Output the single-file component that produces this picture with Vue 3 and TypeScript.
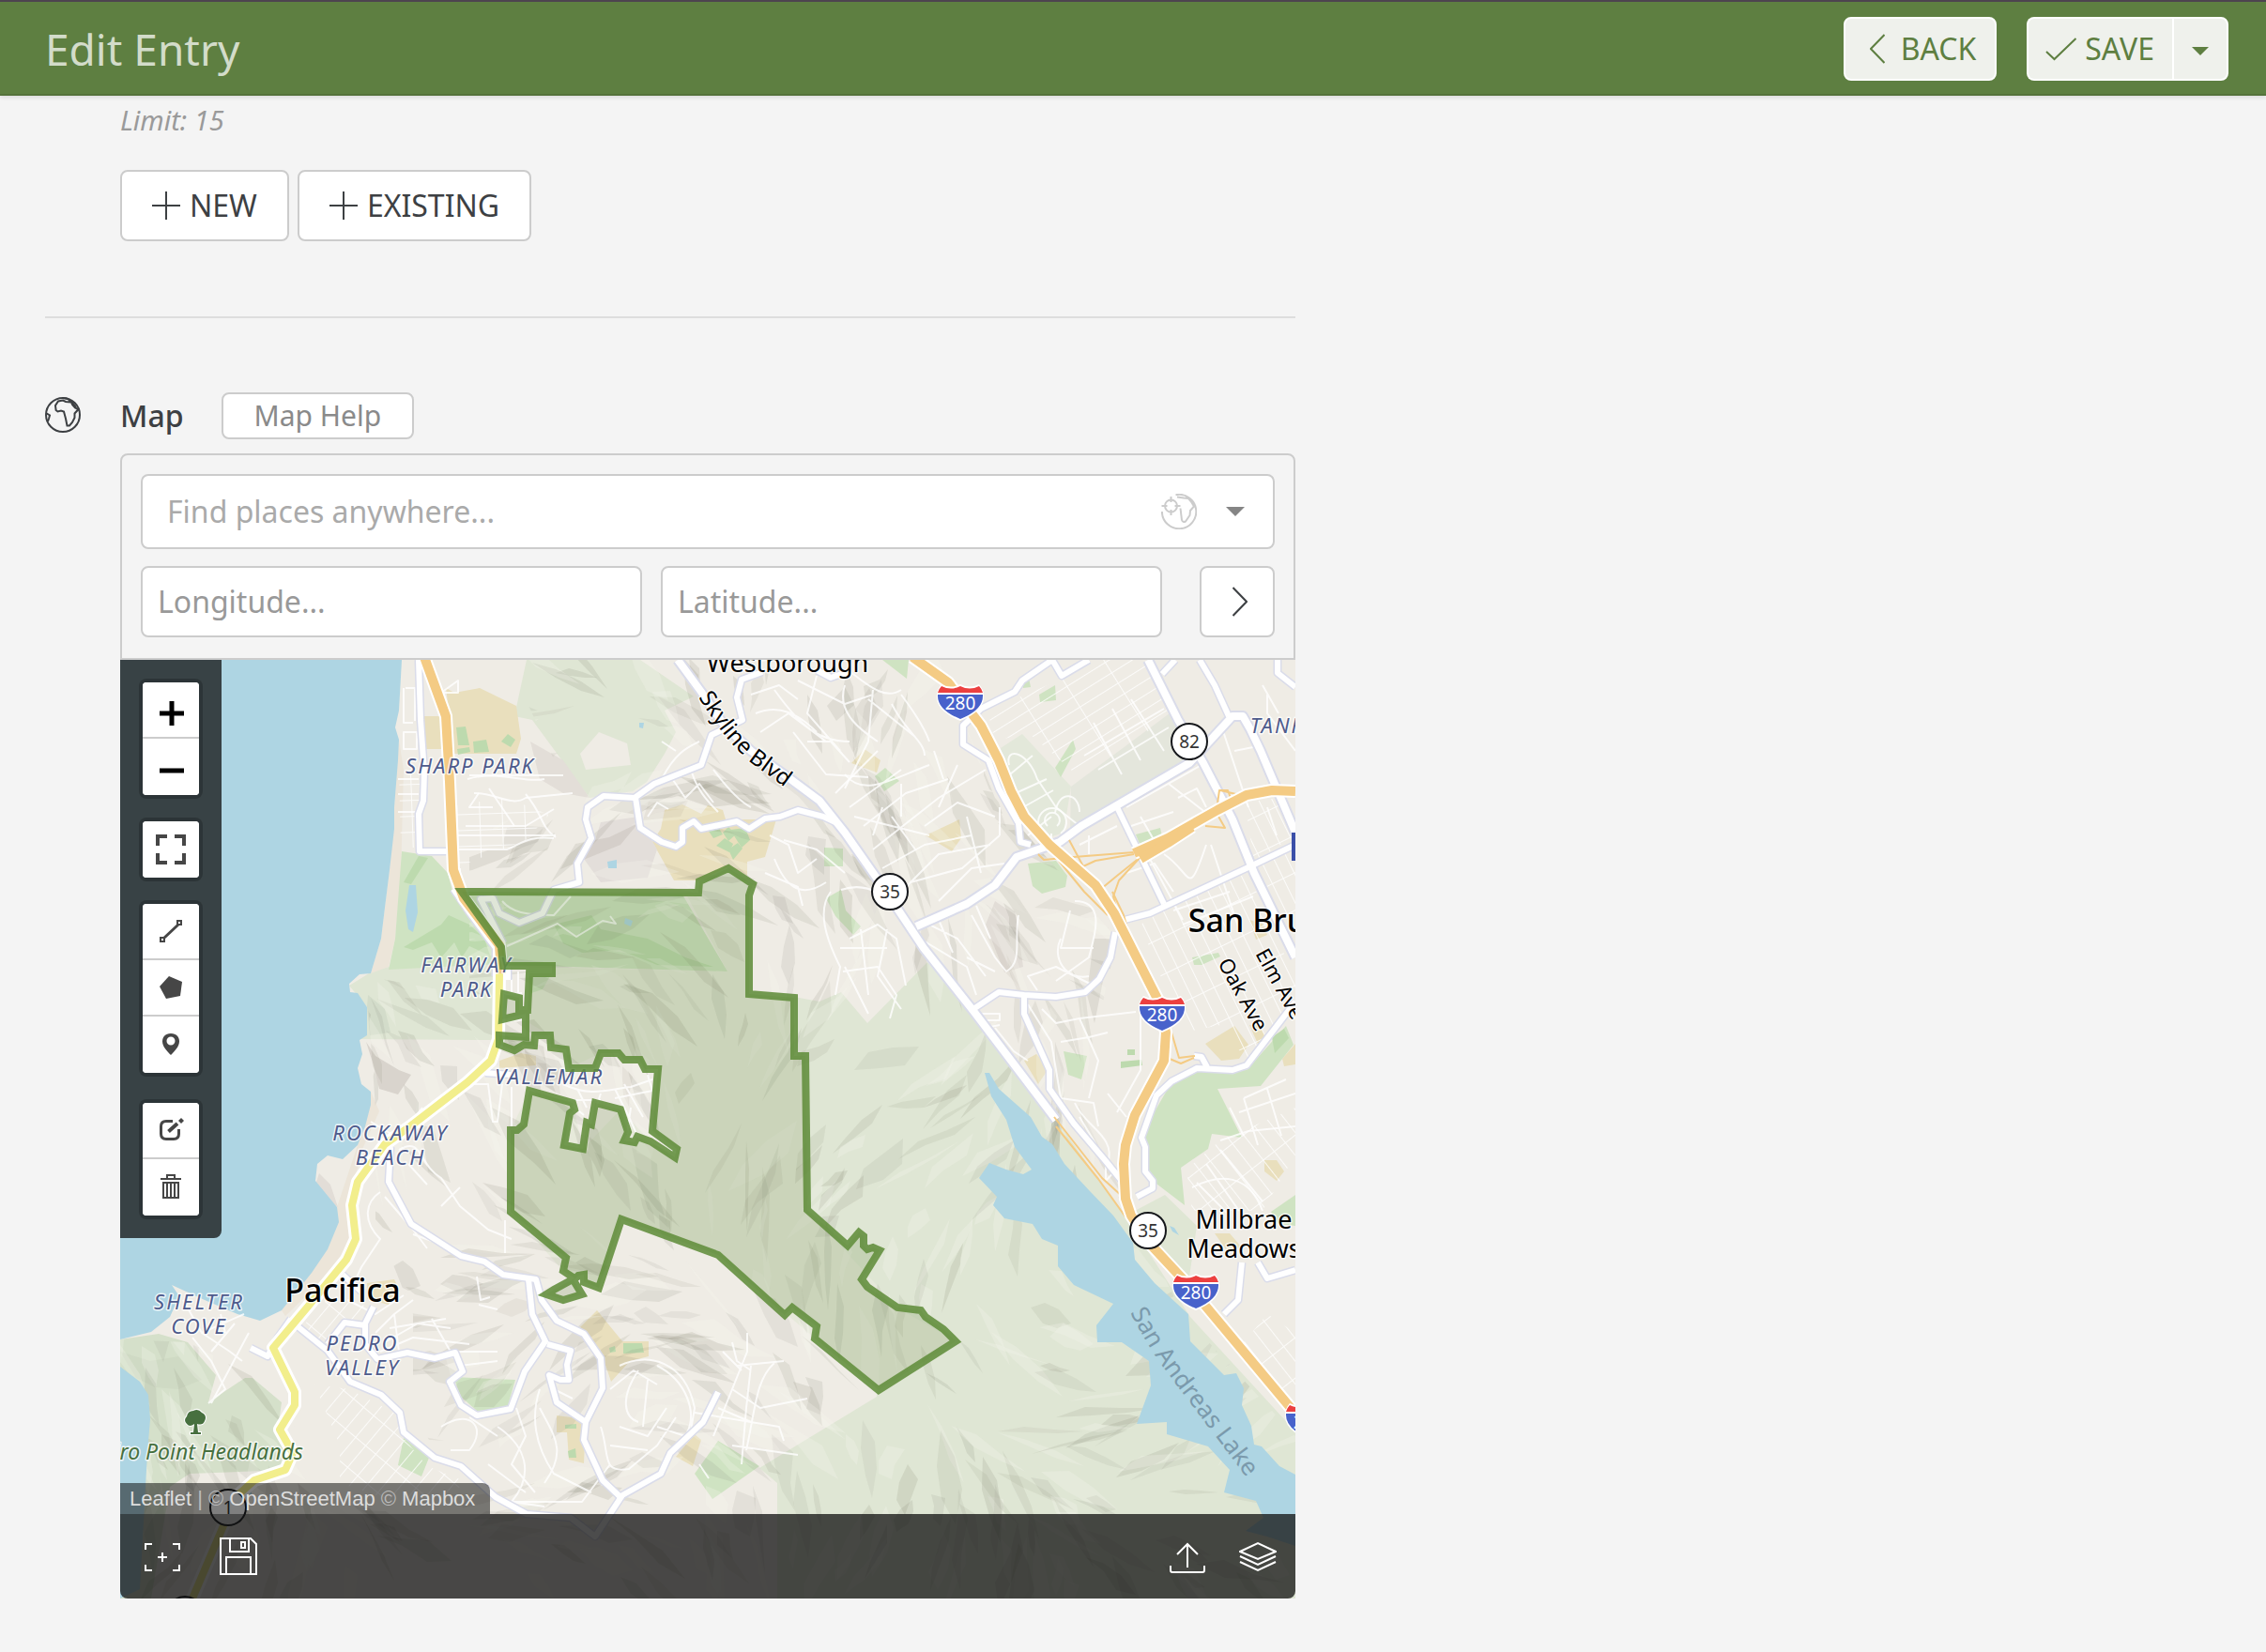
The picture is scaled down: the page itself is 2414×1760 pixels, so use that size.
<script setup lang="ts">
import { ref } from 'vue'

interface Shape {
  fill: string
  points: string
}
interface Label {
  x: number
  y: number
  lines: string[]
  kind: string
}
interface Marker {
  x: number
  y: number
  text: string
}

const place = ref('')
const longitude = ref('')
const latitude = ref('')

const sand = '#e9dfbd'
const park = '#cfe3c2'
const pale = '#dfe6d4'
const field = '#bddaae'
const beach = '#ece5d9'

const shapes: Shape[] = [
  // open space and watershed
  { fill: pale, points: '561,703 682,703 739,742 708,757 720,780 708,803 689,833 674,843 628,850 567,767 548,763' },
  { fill: '#efece5', points: '638,780 668,792 672,815 624,820 618,803' },
  { fill: pale, points: '846,1062 873,1067 896,1057 924,1090 988,1025 1037,1080 1125,1193 1203,1302 1268,1403 1380,1525 1380,1703 828,1703 828,1580 809,1564 934,1488 940,1380 858,1290' },
  { fill: '#e3e8da', points: '1066,797 1089,782 1141,838 1133,887 1118,892 1075,843' },
  { fill: '#e4e6dc', points: '1141,838 1246,760 1271,807 1140,884' },
  { fill: '#d5e0ca', points: '128,1427 169,1421 200,1430 230,1465 222,1494 261,1468 269,1468 300,1494 296,1523 312,1548 304,1566 202,1570 181,1584 161,1703 128,1703' },
  { fill: pale, points: '398,1034 430,1026 530,1026 525,1108 383,1107 391,1073 372,1050' },
  { fill: pale, points: '1207,1291 1241,1273 1275,1306 1266,1367 1224,1330' },
  // preserve inside the drawn region
  { fill: '#e6e9da', points: '730,951 776,925 802,942 798,1059 846,1063 846,1125 858,1125 860,1289 956,1393 1018,1429 936,1481 868,1426 765,1337 662,1299 638,1372 600,1354 544,1291 544,1204 564,1162 610,1175 621,1224 661,1182 693,1216 719,1233 695,1205 701,1139 640,1122 606,1138 586,1103 564,1090 564,1030 775,1035' },
  // beaches
  { fill: beach, points: '425,788 430,820 427,933 421,1000 414,1030 395,1037 406,1000 415,927 420,860' },
  { fill: beach, points: '395,1163 404,1184 387,1222 376,1262 369,1290 373,1324 344,1363 304,1402 300,1396 349,1331 359,1286 381,1220 387,1204' },
  // school grounds
  { fill: sand, points: '475,733 484,738 511,733 550,752 555,787 550,803 484,803' },
  { fill: sand, points: '452,763 472,763 476,798 453,798' },
  { fill: sand, points: '708,863 727,857 747,867 754,858 770,863 773,873 827,873 815,913 796,918 796,933 777,923 745,938 718,938 695,897 704,883' },
  { fill: sand, points: '532,1130 555,1122 571,1125 571,1135 532,1138' },
  { fill: sand, points: '636,1396 663,1429 691,1429 691,1445 671,1450 651,1472 640,1439 618,1414' },
  { fill: sand, points: '593,1508 624,1512 622,1559 606,1555 604,1526 593,1526' },
  { fill: sand, points: '720,1552 740,1528 747,1534 738,1562' },
  { fill: sand, points: '391,1367 420,1363 426,1375 414,1390 391,1384' },
  { fill: sand, points: '907,813 921,798 938,810 934,823' },
  { fill: sand, points: '986,890 1022,873 1024,893 1014,907' },
  { fill: sand, points: '1284,1112 1315,1093 1330,1113 1320,1128 1301,1130' },
  { fill: sand, points: '1091,1130 1104,1123 1118,1137 1106,1155' },
  { fill: sand, points: '1347,1236 1360,1236 1368,1248 1360,1258 1347,1248' },
  { fill: sand, points: '1331,980 1345,984 1350,996 1338,1001' },
  { fill: sand, points: '1331,1092 1342,1092 1348,1104 1340,1112' },
  { fill: sand, points: '1366,1128 1380,1112 1380,1134 1368,1136' },
  { fill: sand, points: '1294,1314 1310,1314 1322,1328 1308,1334' },
  // parks
  { fill: park, points: '428,907 460,912 477,930 483,953 528,1013 530,1027 414,1033 421,1000' },
  { fill: park, points: '498,950 727,953 775,1035 540,1028 536,1010' },
  { fill: park, points: '564,1040 586,1040 578,1054 566,1058' },
  { fill: park, points: '483,1467 549,1470 540,1501 508,1503 491,1488' },
  { fill: park, points: '430,1532 459,1548 449,1573 424,1561' },
  { fill: park, points: '765,1535 809,1562 759,1597 740,1570' },
  { fill: park, points: '940,703 968,703 966,723' },
  { fill: park, points: '932,827 943,818 958,832 942,843' },
  { fill: park, points: '878,903 898,904 898,923 878,923' },
  { fill: park, points: '880,957 896,948 901,970 917,987 909,996 890,976' },
  { fill: park, points: '1095,920 1125,917 1137,933 1135,945 1110,952 1100,944' },
  { fill: park, points: '1133,1120 1158,1125 1152,1150 1138,1145' },
  { fill: park, points: '1107,740 1124,730 1125,746 1108,748' },
  { fill: park, points: '1089,727 1096,722 1098,732 1090,733' },
  { fill: park, points: '1124,818 1143,788 1146,798 1130,828' },
  { fill: park, points: '1210,889 1236,882 1238,891 1214,899' },
  { fill: park, points: '1270,1020 1298,1015 1300,1019 1280,1028 1272,1028' },
  { fill: park, points: '1221,1200 1248,1153 1275,1142 1328,1140 1370,1093 1378,1113 1343,1157 1297,1160 1317,1200 1323,1212 1291,1208 1287,1224 1258,1244 1262,1284 1224,1255 1216,1215' },
  { fill: park, points: '1354,1291 1380,1273 1380,1306 1362,1304' },
  // playing fields
  { fill: field, points: '486,775 496,774 500,794 488,794' },
  { fill: field, points: '504,790 518,788 521,801 505,802' },
  { fill: field, points: '534,790 541,782 549,788 544,796' },
  { fill: field, points: '487,798 500,796 501,801 488,804' },
  { fill: field, points: '754,884 765,881 770,889 760,893' },
  { fill: field, points: '770,887 776,881 784,889 776,896' },
  { fill: field, points: '778,884 794,882 799,895 790,903' },
  { fill: field, points: '763,901 772,893 781,899 777,908' },
  { fill: field, points: '776,905 786,898 791,904 781,916' },
  { fill: field, points: '664,1431 684,1431 686,1441 664,1442' },
  { fill: field, points: '649,1436 655,1434 656,1440 650,1441' },
  { fill: field, points: '602,1518 614,1517 614,1522 602,1522' },
  { fill: field, points: '605,1546 613,1543 614,1553 606,1553' },
  { fill: field, points: '1201,1118 1209,1118 1209,1124 1201,1124' },
  { fill: field, points: '1194,1131 1216,1129 1217,1135 1194,1138' },
  { fill: field, points: '1355,1105 1368,1096 1373,1106 1358,1122' },
  { fill: field, points: '430,940 446,912 456,914 438,942' },
  { fill: field, points: '430,1009 470,985 478,975 500,985 516,1000 522,1018 500,1008 492,1020 484,1004 470,1020 460,1004 440,1012' },
  { fill: field, points: '590,985 630,975 640,990 690,1000 730,1020 760,1030 700,1028 660,1012 620,1015 600,1005' },
  // ridges seen as darker folds
  { fill: '#e3deda', points: '640,876 680,870 700,905 690,935 640,940 622,915 634,895' },
  { fill: '#e3ded8', points: '565,790 600,810 628,850 600,845 575,830' },
  { fill: '#d9d4cd', points: '390,1110 400,1125 425,1140 438,1145 424,1166 404,1160 398,1135' },
  { fill: '#e2ddd7', points: '340,1250 352,1262 360,1286 345,1275 336,1262' },
  { fill: '#cfdac4', points: '128,1440 160,1450 190,1445 215,1470 190,1480 165,1478 145,1468' },
  { fill: '#d3dcca', points: '392,1060 410,1075 416,1100 394,1103 391,1073' },
  { fill: '#e2ddd7', points: '1060,960 1082,975 1090,1030 1070,1036 1050,985' },
  { fill: '#dedbd3', points: '1165,1000 1185,1000 1175,1045 1166,1090 1158,1060' },
]

// Angular slivers of shadow and light that give the slopes their relief.
interface Facet {
  points: string
  fill: string
  opacity: number
}
function makeFacets(count: number): Facet[] {
  let state = 20731
  const next = () => {
    state = (state * 16807) % 2147483647
    return state / 2147483647
  }
  const facets: Facet[] = []
  for (let i = 0; i < count; i++) {
    const cx = 128 + next() * 1252
    const cy = 703 + next() * 1000
    const turn = 0.9 * Math.sin(cx / 120) + 0.8 * Math.cos(cy / 95) + 0.9 + (next() - 0.5) * 0.7
    const long = 16 + next() * 38
    const wide = 3 + next() * 10
    const outline = [
      [-long, -wide * 0.2],
      [-long * 0.4, -wide * (0.5 + next())],
      [long * 0.3, -wide * next()],
      [long, wide * 0.4],
      [long * 0.4, wide * (0.4 + next())],
      [-long * 0.3, wide * next()],
    ]
    const points = outline
      .map(([x, y]) => {
        const px = cx + x * Math.cos(turn) - y * Math.sin(turn)
        const py = cy + x * Math.sin(turn) + y * Math.cos(turn)
        return `${Math.round(px)},${Math.round(py)}`
      })
      .join(' ')
    const dark = next() > 0.38
    facets.push({ points, fill: dark ? '#6b6a58' : '#f6f8ee', opacity: dark ? 0.07 + next() * 0.06 : 0.25 })
  }
  return facets
}
const facets = makeFacets(900)

const waters: string[] = [
  '128,703 428,703 425,757 421,775 425,788 424,810 420,860 420,883 415,927 410,967 406,1000 395,1037 383,1038 372,1048 373,1057 381,1058 391,1073 391,1103 383,1108 386,1123 381,1138 385,1155 395,1163 395,1177 389,1200 381,1220 365,1235 349,1231 338,1240 336,1258 359,1286 361,1302 349,1331 332,1356 300,1396 277,1407 253,1400 218,1385 183,1369 191,1381 181,1403 161,1419 128,1427',
  '128,1456 149,1472 158,1486 160,1512 157,1548 155,1584 151,1656 149,1693 128,1703',
  '1049,1143 1054,1143 1064,1160 1098,1190 1102,1197 1110,1211 1121,1219 1134,1240 1161,1269 1186,1295 1207,1324 1209,1342 1230,1367 1266,1400 1268,1429 1304,1465 1317,1463 1325,1479 1323,1497 1333,1519 1336,1539 1344,1541 1363,1562 1380,1571 1380,1647 1371,1644 1350,1637 1327,1631 1346,1617 1338,1599 1304,1590 1310,1566 1287,1541 1243,1528 1243,1515 1211,1517 1226,1476 1224,1450 1195,1430 1169,1430 1168,1412 1186,1389 1144,1369 1127,1349 1127,1327 1110,1320 1100,1304 1070,1298 1058,1284 1062,1275 1043,1255 1054,1239 1072,1246 1090,1251 1099,1246 1081,1222 1072,1193 1056,1168',
  '436,943 443,943 445,972 440,993 435,990 432,970',
  '647,918 657,916 657,925 648,925',
  '666,978 674,981 672,987 665,984',
  '681,770 686,770 685,776 681,775',
  '1246,1306 1251,1308 1256,1316 1249,1312',
  '262,1592 268,1582 268,1592',
]

const grids: { id: string; points: string }[] = [
  { id: 'gridEast', points: '1336,925 1380,905 1380,1005 1372,1000' },
  { id: 'gridEast', points: '1245,966 1330,930 1365,1010 1380,1040 1380,1060 1330,1132 1300,1092 1260,1100 1215,985' },
  { id: 'gridEast', points: '1326,855 1362,850 1380,890 1336,918' },
  { id: 'gridTop', points: '1052,757 1130,724 1165,703 1220,703 1248,762 1150,828 1095,780 1060,790' },
  { id: 'gridWest', points: '425,820 448,820 447,903 427,903' },
  { id: 'gridWest', points: '484,858 540,850 585,868 560,895 484,925' },
  { id: 'gridValley', points: '335,1475 372,1480 420,1505 428,1530 455,1562 500,1580 440,1606 362,1580 362,1540' },
  { id: 'gridValley', points: '318,1418 352,1380 392,1392 385,1410 365,1405 348,1430' },
  { id: 'gridMill', points: '1264,1246 1300,1215 1380,1180 1380,1230 1345,1290 1270,1290' },
  { id: 'gridMill', points: '1325,1430 1350,1400 1380,1420 1380,1480 1366,1480' },
]

const streets: string[] = [
  'M498 830 C530 820 560 835 580 830 M505 845 C530 845 545 860 560 850 L610 845 M496 880 H560 L590 862 M484 905 H540 C555 900 560 890 590 893 M490 925 V960 M535 960 C545 972 560 975 590 975 L608 955',
  'M500 826 H600 M510 845 L500 860 H525 M521 840 L548 880 M560 846 C580 870 575 880 592 892 M484 890 H592',
  'M430 733 V770 H440 M432 733 H442 V768 M430 780 H444 V798 H430 Z M424 830 H446 M424 846 H446 M424 865 H446 M470 738 L488 725 V738 Z',
  'M705 830 C720 800 735 795 745 790 M715 828 L730 850 L745 835 L760 855 M760 820 C775 840 790 855 800 860 M735 815 C740 840 755 855 765 865 M690 870 L700 855 L712 862 M720 800 L705 790',
  'M800 740 L830 730 L850 745 M805 760 C830 750 850 760 870 780 M810 780 L840 760 L880 790 M825 735 C850 770 870 790 905 790 M850 725 L900 750 L930 740 M870 720 L860 760 L895 800 M905 715 C930 735 945 745 960 735 M900 730 C890 760 920 780 935 790 M930 735 L925 790 L900 840 M960 740 C975 760 985 775 990 790 M950 750 C965 780 985 790 985 805 M845 780 L880 825 L925 828 M860 790 L885 790 L905 812 M925 745 L975 785',
  'M890 845 L935 800 M905 860 L960 820 M900 825 C920 850 950 830 990 815 M920 880 L965 845 L1010 830 M910 870 L990 890 M930 905 L1000 850 L1050 820 M960 835 V870 M995 800 L1005 830 M1020 815 L1000 860 M940 925 L985 900 L1035 890 M950 870 L975 905 M965 945 L1000 910 L1055 900 M970 940 L1025 925 L1065 890 M985 880 L1020 855 L1060 870 M1000 960 L1035 925 L1070 920 M1030 870 L1045 930 M1065 860 V890 M940 860 L930 890',
  'M820 890 L840 900 L850 930 L870 915 M825 915 C835 940 850 960 880 940 M835 895 L870 905 L900 930 M815 930 L850 945 L855 965',
  'M885 950 C870 970 880 1000 895 1030 L890 1060 M896 948 C920 940 940 950 955 970 M905 1000 L935 985 L955 1000 L965 1050 M900 1030 L925 1080 M898 1035 L935 1030 L955 1060 L948 1085 M917 990 L925 1060 M945 990 L935 1040 L960 1075 M895 1010 L945 1010',
  'M980 1000 L1030 1030 L1040 1060 M990 985 L1020 1000 L1050 1040 M1000 980 L1015 1015 M1035 975 L1060 1020 L1072 1035 C1090 1025 1080 1000 1085 975 M1040 965 L1055 1000 M1130 1000 C1120 1020 1135 1045 1160 1040 M1145 960 C1180 960 1165 1000 1160 1020 L1125 1045 M1140 970 L1130 1010 L1165 1010 M1105 1055 L1095 1040 L1125 1030 L1165 1050 M1030 1020 L1060 1035',
  'M1075 815 C1070 795 1095 800 1105 830 L1125 860 M1076 825 L1100 805 M1082 845 L1115 830 M1090 860 L1122 842 M1125 860 L1150 880 M1095 890 L1120 870',
  'M1112 888 A15 15 0 1 1 1130 888 M1116 880 A8 8 0 1 1 1126 880 M1120 900 V888 M1150 865 C1150 845 1128 840 1124 866',
  'M1165 770 L1195 825 M1185 755 L1215 810 M1205 745 L1240 800 M1170 820 L1245 775 M1155 805 L1240 755 M1200 860 L1280 815 M1215 870 L1235 905 M1245 835 L1290 870 M1255 850 L1275 840 L1285 860 M1205 880 L1250 865 M1150 900 L1190 880 M1160 890 V910',
  'M1200 930 L1230 920 L1250 950 M1225 915 L1260 980 M1240 910 C1270 930 1265 960 1285 900 M1250 970 L1310 950 M1260 985 L1335 955 M1290 900 L1320 990 M1300 770 L1330 860 M1315 800 L1340 795 M1350 740 V760 L1380 800 M1345 730 L1362 760 M1350 860 L1360 890',
  'M1045 1080 H1065 V1087 H1045 Z M1050 1095 L1065 1092 M1110 1075 L1125 1090 L1150 1085 L1210 1078 M1095 1070 L1120 1110 L1130 1170 L1165 1175 L1170 1200 M1130 1110 L1160 1105 L1180 1100 M1150 1085 L1170 1130 L1160 1170 M1215 1080 V1140 L1190 1185 M1145 1175 C1155 1200 1190 1210 1180 1240 L1150 1190 M1180 1165 L1200 1190 M1060 1095 L1080 1120 L1095 1130 M1178 1235 V1258 L1190 1245',
  'M500 1155 L520 1155 L525 1195 H530 L535 1155 M545 1158 V1200 M600 1155 C630 1170 650 1160 672 1158 L695 1150 M615 1160 L625 1180 M640 1165 L635 1180 M655 1160 L670 1190 L680 1212 L720 1228 M665 1155 L685 1190 M690 1145 L695 1162 L655 1170 M672 1180 L668 1208 M610 1178 L622 1188 M605 1172 H640',
  'M545 1043 V1060 M552 1035 V1058 M536 1060 L556 1058 M540 1088 L556 1086',
  'M540 1008 L594 984 L614 998 L642 981 L656 984 L650 976',
  'M430 1205 L450 1180 M425 1225 C450 1210 445 1240 470 1255 L490 1285 L520 1310 L545 1320 M470 1285 L490 1265 M435 1240 L455 1262 M405 1270 C390 1280 385 1300 405 1320 L385 1350 L378 1365 M410 1275 L440 1310 L455 1330 M440 1315 L460 1322 M538 1300 V1335 M395 1195 L420 1210 M370 1385 L400 1400 L430 1380 M400 1420 L420 1400 L440 1385 M410 1430 L445 1410 L480 1415 M405 1440 L440 1425 L500 1432 M415 1415 L475 1405 M420 1400 L425 1440 M460 1405 L480 1440 L530 1440 M490 1455 L530 1450 M508 1360 L512 1385 L522 1382 M510 1390 L530 1395',
  'M205 1425 L225 1450 L240 1480 L222 1495 M215 1420 L245 1440 L258 1450 M235 1400 L240 1420 M250 1410 L225 1440 M265 1420 L225 1495 M195 1385 L215 1420 L260 1400',
  'M660 1455 C690 1440 730 1450 740 1500 L735 1530 M650 1480 L675 1460 L700 1475 M680 1460 C660 1490 665 1510 680 1515 M700 1455 C730 1470 745 1505 730 1530 L700 1520 M710 1500 L690 1530 L660 1520 M640 1520 C650 1550 640 1570 670 1565 L700 1540 L720 1510 M650 1540 L690 1545 M690 1470 L685 1520 M575 1480 C565 1510 570 1540 590 1570 L630 1590 M575 1500 C590 1530 605 1545 580 1580 M590 1480 L610 1490 M550 1500 L560 1530 L545 1560 L570 1590 M530 1520 C560 1540 570 1570 545 1600 L580 1605 M520 1560 L560 1590 M470 1520 C500 1500 520 1520 500 1545 L480 1545 M500 1510 L530 1530 M535 1600 H620 L650 1560',
  'M780 1430 L785 1450 L800 1460 M796 1420 V1440 L790 1455 L760 1530 M785 1455 L835 1450 M800 1455 L795 1500 L790 1560 M825 1452 C805 1470 805 1500 795 1545 M780 1480 L810 1500 L860 1490 M740 1505 L830 1520 L835 1535 M765 1500 L800 1515 M770 1440 L790 1460 M745 1560 L755 1575 M780 1540 L850 1550',
  'M1300 1215 L1330 1205 L1380 1200 M1320 1185 L1380 1165 M1325 1170 L1370 1150 M1270 1265 C1300 1250 1330 1250 1345 1290 M1285 1240 L1320 1290 M1275 1260 L1310 1295 M1300 1225 L1345 1280 M1325 1170 L1340 1220 M1350 1160 L1365 1210 M1310 1180 L1325 1210',
]

const roads: string[] = [
  'M1160 703 L1131 720 L1121 703 L1089 725 L1081 737 L1045 755 L1026 773 V793 L1053 810 L1064 840 L1085 877 L1087 897 L1098 900',
  'M1190 860 L1240 963',
  'M1198 980 L1225 973 L1332 923 L1380 900',
  'M1188 993 L1183 1020 L1171 1043 L1156 1057 L1125 1062 L1091 1060 L1064 1057 L1037 1075',
  'M1091 1060 V1080 L1118 1140 V1160 L1144 1197 L1178 1237 L1195 1258',
  'M1211 1275 L1228 1266 V1258 L1220 1248 V1222 L1216 1212 L1232 1167 L1248 1152 L1275 1138 L1313 1140 L1328 1135 L1380 1067',
  'M1286 1137 L1280 1126 L1272 1125',
  'M1323 1345 L1319 1385 L1304 1400',
  'M1340 1345 L1350 1362 L1380 1353',
  'M1278 703 L1294 730 L1309 763',
  'M1252 703 L1238 718',
  'M1361 703 V717 L1380 732',
  'M446 703 L448 767 L452 823 L451 853 L446 867 L447 907 L479 907',
  'M892 877 L877 870 L850 863 L831 870 L815 872 L798 883 L785 875 L747 883 L739 875 L727 882 V897 L720 902 L705 897 L682 882 L677 850',
  'M812 716 L790 724 L785 743 L791 767 L758 783 L747 815 L697 835 L676 850 L643 848 L626 860 L624 873 L630 893 L615 920 L617 940 L590 948 L578 973 L553 983 L532 973 L525 957 L512 958 L536 1005',
  'M870 714 L885 722 L902 716',
  'M483 947 L500 972 L528 1010 V1040',
  'M541 1030 V1044',
  'M517 1143 L544 1145',
  'M416 1222 L414 1259 L438 1304 L491 1338 L516 1344 L536 1358 L571 1363 L577 1385 L593 1407 L622 1421 L640 1447 L642 1479 L624 1515 L622 1534 L642 1577 L661 1595',
  'M563 1363 L567 1400 L581 1429 L559 1461 L544 1501 L508 1508 L491 1497 L479 1472 L493 1461 L485 1441 L463 1447 L434 1441 L402 1448 L389 1432 V1410 L398 1392',
  'M583 1432 L608 1439 L604 1454 L606 1470 L597 1470 L585 1465 L593 1494 L624 1515',
  'M318 1414 L349 1439 L373 1472 L406 1486 L426 1505 L430 1526 L463 1553 L491 1562 L528 1595 L561 1613 L608 1617 L634 1637 L663 1593 L704 1570 L714 1548 L749 1515 L765 1483',
  'M349 1432 L367 1409 L389 1412',
  'M310 1405 L296 1425 L285 1445 L267 1436',
  'M365 1358 L385 1376',
]

const arterials: string[] = [
  'M722 703 L747 737 L771 772 L800 800 L842 830 L873 853 L900 887 L942 947 L984 1010 L1037 1077 L1125 1193',
  'M976 987 L1030 963 L1060 943 L1083 913 L1129 897 L1152 880 L1267 813 L1313 763 L1324 763 L1332 777 L1343 800 L1380 887',
  'M1223 703 L1255 767 L1282 813 L1313 873 L1336 930 L1380 1020',
]

const freeways: string[] = [
  'M452 700 L475 763 L479 833 L483 927 L494 957 L532 1007 L534 1037',
  'M972 700 L1010 727 L1045 773 L1064 810 L1077 843 L1091 870 L1118 900 L1167 943 L1187 973 L1236 1070 L1242 1100 L1240 1130 L1209 1188 L1199 1220 L1197 1240 L1199 1277 L1205 1295 L1224 1324 L1264 1367 L1385 1512',
  'M1208 909 L1244 893 L1297 863 L1328 847 L1355 842 L1380 843',
  'M1215 915 L1244 898 L1270 881',
]

const ramps: string[] = [
  'M1106 910 L1112 916 L1144 913 L1208 908',
  'M1139 895 L1154 923 L1167 917 L1208 910',
  'M1173 947 L1190 933 L1215 913',
  'M1215 913 L1192 938 L1186 955 L1190 972',
  'M1128 917 L1155 950 L1180 975',
  'M1150 925 L1162 940',
  'M1185 950 L1197 975 L1203 995',
  'M1045 770 L1052 790',
  'M1248 1100 L1256 1127 L1273 1125 M1246 1128 L1258 1133 L1272 1127',
  'M1123 1190 L1174 1255 L1196 1275 M1125 1200 L1170 1256 L1203 1302',
  'M1284 880 L1305 882 L1297 868 M1296 863 L1299 842 L1308 842 L1312 853 M1300 842 L1325 848',
]

const coastRoad =
  'M532 1037 L531 1107 L523 1130 L498 1153 L437 1200 L410 1219 L381 1259 L375 1284 L379 1320 L369 1342 L328 1392 L291 1436 L314 1483 V1497 L298 1523 L312 1548 L304 1566 L271 1577 L251 1595 L202 1710'

const region =
  '492,950 744,951 745,939 776,925 802,942 798,954 798,1059 846,1063 846,1125 858,1125 860,1289 903,1327 915,1313 920,1317 920,1327 924,1331 930,1329 937,1332 918,1363 924,1371 956,1393 981,1396 986,1403 1005,1416 1018,1429 936,1481 868,1426 870,1413 844,1393 836,1401 765,1337 662,1299 638,1372 622,1366 622,1358 616,1359 611,1364 620,1379 600,1385 582,1379 590,1374 612,1362 600,1354 603,1340 544,1291 544,1204 551,1204 558,1198 564,1162 610,1175 612,1182 607,1186 601,1220 621,1224 625,1196 630,1198 634,1175 661,1182 669,1206 665,1215 676,1217 679,1211 693,1216 719,1233 721,1224 695,1205 701,1139 687,1139 682,1129 665,1129 659,1122 640,1122 634,1138 606,1138 603,1118 587,1116 586,1103 570,1103 569,1114 558,1113 548,1119 532,1113 532,1103 560,1105 560,1080 535,1086 537,1059 553,1063 553,1076 562,1076 564,1037 588,1037 588,1029 536,1029 534,1009'

const labels: Label[] = [
  { x: 501, y: 824, lines: ['SHARP PARK'], kind: 'area' },
  { x: 497, y: 1036, lines: ['FAIRWAY', 'PARK'], kind: 'area' },
  { x: 585, y: 1155, lines: ['VALLEMAR'], kind: 'area' },
  { x: 416, y: 1215, lines: ['ROCKAWAY', 'BEACH'], kind: 'area' },
  { x: 212, y: 1395, lines: ['SHELTER', 'COVE'], kind: 'area' },
  { x: 386, y: 1439, lines: ['PEDRO', 'VALLEY'], kind: 'area' },
  { x: 1392, y: 781, lines: ['TANFORAN'], kind: 'area' },
  { x: 365, y: 1387, lines: ['Pacifica'], kind: 'city' },
  { x: 1350, y: 993, lines: ['San Bruno'], kind: 'city' },
  { x: 839, y: 716, lines: ['Westborough'], kind: 'town' },
  { x: 1325, y: 1309, lines: ['Millbrae', 'Meadows'], kind: 'town' },
]
const lineStep: Record<string, number> = { area: 26, city: 40, town: 31 }

const shields: Marker[] = [
  { x: 1023, y: 748, text: '280' },
  { x: 1238, y: 1080, text: '280' },
  { x: 1274, y: 1376, text: '280' },
  { x: 1394, y: 1514, text: '280' },
]
const circles: Marker[] = [
  { x: 1267, y: 790, text: '82' },
  { x: 948, y: 950, text: '35' },
  { x: 1223, y: 1311, text: '35' },
  { x: 243, y: 1606, text: '1' },
  { x: 197, y: 1720, text: '1' },
]
</script>

<template>
  <div class="page">
    <header class="topbar">
      <h1>Edit Entry</h1>
      <div class="actions">
        <button type="button" class="action">
          <svg class="ico-back" viewBox="0 0 16 32"><path d="M15.5 1 L1 16 L15.5 31" /></svg>
          <span>BACK</span>
        </button>
        <div class="split">
          <button type="button" class="action save">
            <svg class="ico-check" viewBox="0 0 34 32"><path d="M1 19 L9.500 27 L32.500 5" /></svg>
            <span>SAVE</span>
          </button>
          <button type="button" class="action more" aria-label="More save options">
            <svg class="ico-caret" viewBox="0 0 18 9"><path d="M0 0 H18 L9 9 Z" /></svg>
          </button>
        </div>
      </div>
    </header>

    <main class="content">
      <div class="column">
        <section class="related">
          <p class="limit">Limit: 15</p>
          <div class="adders">
            <button type="button" class="outline">
              <svg class="ico-plus" viewBox="0 0 30 30"><path d="M15 0 V30 M0 15 H30" /></svg>NEW
            </button>
            <button type="button" class="outline">
              <svg class="ico-plus" viewBox="0 0 30 30"><path d="M15 0 V30 M0 15 H30" /></svg>EXISTING
            </button>
          </div>
        </section>

        <hr />

        <section class="field">
          <svg class="globe" viewBox="0 0 38 38">
            <circle cx="19" cy="19" r="18" />
            <path d="M11.600 14 L11 9 L14 4.500 L19 3.500 L22 5 L28 5.500 L29 8 L32 11.500 L35.500 13 L31.500 17.500 L31.500 22 L29 27 L26 30.500 L23.500 30.500 L22 23 L20 15.500 L17 14.500 L13.500 15.500 Z M1 17 L5 19.500 L4 23 L3 26 M19 1 L24 2 L29 5.500 L33 11" />
          </svg>
          <div class="field-body">
            <div class="field-head">
              <h2>Map</h2>
              <button type="button" class="help">Map Help</button>
            </div>

            <div class="search-panel">
              <div class="search">
                <input v-model="place" type="text" aria-label="Find places" placeholder="Find places anywhere..." />
                <button type="button" class="bare" aria-label="Use my location">
                  <svg class="ico-locate" viewBox="0 0 38 38">
                    <path d="M.9 19 A18.200 18.200 0 1 0 15.500 1.200 M20.500 15.500 L22 28 Q23 31 26 29.500 L30.500 23 L31 18 L35 13.500 L32 8.500 L29 5 L24 4.500 L17 3.500" />
                    <circle cx="10.500" cy="13" r="6.500" />
                    <path d="M10.500 3 V9 M10.500 17 V23 M0.500 13 H6.500 M14.500 13 H20.500" />
                  </svg>
                </button>
                <button type="button" class="bare" aria-label="Show options">
                  <svg class="ico-drop" viewBox="0 0 20 10"><path d="M0 0 H20 L10 10 Z" /></svg>
                </button>
              </div>
              <div class="coords">
                <input v-model="longitude" type="text" aria-label="Longitude" placeholder="Longitude..." />
                <input v-model="latitude" type="text" aria-label="Latitude" placeholder="Latitude..." />
                <button type="button" class="go" aria-label="Go to coordinates">
                  <svg class="ico-go" viewBox="0 0 16 32"><path d="M.5 1 L15 16 L.5 31" /></svg>
                </button>
              </div>
            </div>

            <div class="map">
              <svg class="canvas" viewBox="128 703 1252 1000" preserveAspectRatio="xMinYMin slice" role="img" aria-label="Map of Pacifica and San Bruno">
                <defs>
                  <pattern id="gridEast" width="36" height="13" patternUnits="userSpaceOnUse" patternTransform="rotate(64)"><path d="M0 0 H36 M0 0 V13" /></pattern>
                  <pattern id="gridTop" width="48" height="13" patternUnits="userSpaceOnUse" patternTransform="rotate(-32)"><path d="M0 0 H48 M0 0 V13" /></pattern>
                  <pattern id="gridWest" width="24" height="17" patternUnits="userSpaceOnUse" patternTransform="rotate(-2)"><path d="M0 0 H24 M0 0 V17" /></pattern>
                  <pattern id="gridValley" width="30" height="14" patternUnits="userSpaceOnUse" patternTransform="rotate(-50)"><path d="M0 0 H30 M0 0 V14" /></pattern>
                  <pattern id="gridMill" width="34" height="15" patternUnits="userSpaceOnUse" patternTransform="rotate(52)"><path d="M0 0 H34 M0 0 V15" /></pattern>
                  <clipPath id="slopes">
                    <path d="M540 703 H1000 L1060 850 L1190 1000 L1150 1180 L1260 1400 L1380 1530 V1703 H128 V1427 L200 1430 L300 1480 L340 1600 L500 1620 L440 1500 L440 1400 L400 1300 L400 1180 L390 1040 L500 1060 L500 900 L600 830 Z" />
                  </clipPath>
                  <path id="skylinePath" d="M744 743 L760 767 Q778 794 802 814 L846 846" />
                  <path id="lakePath" d="M1204 1398 Q1222 1434 1244 1463 L1334 1582" />
                </defs>

                <rect class="land" x="128" y="703" width="1252" height="1000" />
                <polygon v-for="(s, i) in shapes" :key="'s' + i" :points="s.points" :fill="s.fill" />
                <g clip-path="url(#slopes)">
                  <polygon v-for="(f, i) in facets" :key="'n' + i" :points="f.points" :fill="f.fill" :fill-opacity="f.opacity" />
                </g>
                <polygon v-for="(w, i) in waters" :key="'w' + i" class="water" :points="w" />

                <polygon v-for="(g, i) in grids" :key="'g' + i" :points="g.points" :fill="`url(#${g.id})`" />
                <path v-for="(d, i) in streets" :key="'t' + i" class="street" :d="d" />
                <path v-for="(d, i) in roads" :key="'rc' + i" class="road-case" :d="d" />
                <path v-for="(d, i) in arterials" :key="'ac' + i" class="arterial-case" :d="d" />
                <path v-for="(d, i) in roads" :key="'r' + i" class="road" :d="d" />
                <path v-for="(d, i) in arterials" :key="'a' + i" class="arterial" :d="d" />
                <path v-for="(d, i) in ramps" :key="'m' + i" class="ramp" :d="d" />
                <path class="freeway-case" :d="coastRoad" />
                <path class="coast" :d="coastRoad" />
                <path v-for="(d, i) in freeways" :key="'fc' + i" class="freeway-case" :d="d" />
                <path v-for="(d, i) in freeways" :key="'f' + i" class="freeway" :d="d" />
                <rect x="1376" y="887" width="10" height="30" fill="#3b4fa8" />

                <g v-for="(c, i) in circles" :key="'c' + i">
                  <circle class="ring" :cx="c.x" :cy="c.y" r="19" />
                  <text class="ring-text" :x="c.x" :y="c.y + 7">{{ c.text }}</text>
                </g>
                <g v-for="(s, i) in shields" :key="'h' + i" :transform="`translate(${s.x} ${s.y})`">
                  <path d="M-20 -19 Q-10 -14 0 -19 Q10 -14 20 -19 Q26 -12 25 -4 Q24 10 0 20 Q-24 10 -25 -4 Q-26 -12 -20 -19 Z" fill="#fff" />
                  <path d="M-20 -17 Q-10 -12 0 -17 Q10 -12 20 -17 Q23 -14 24 -10 H-24 Q-23 -14 -20 -17 Z" fill="#ec4040" />
                  <path d="M-24 -8 H24 Q25 8 0 18 Q-25 8 -24 -8 Z" fill="#4862cb" />
                  <text class="shield-text" x="0" y="8">{{ s.text }}</text>
                </g>

                <g v-for="l in labels" :key="l.lines[0]" :class="['label', l.kind]">
                  <text v-for="(t, i) in l.lines" :key="t" :x="l.x" :y="l.y + i * lineStep[l.kind]">{{ t }}</text>
                </g>
                <text class="label street-name"><textPath href="#skylinePath">Skyline Blvd</textPath></text>
                <text class="label street-name small" transform="translate(1297 1026) rotate(61)">Oak Ave</text>
                <text class="label street-name small" transform="translate(1337 1016) rotate(61)">Elm Ave</text>
                <text class="label lake"><textPath href="#lakePath">San Andreas Lake</textPath></text>
                <g class="tree" transform="translate(208 1514)">
                  <path d="M-2 12 L-1 3 Q-6 7 -9 3 Q-13 -1 -9 -5 Q-8 -11 -2 -11 Q3 -14 7 -9 Q13 -6 10 0 Q8 5 2 3 L3 12 H6 V14 H-5 V12 Z" />
                </g>
                <text class="label headland" x="323" y="1555">Pedro Point Headlands</text>

                <polygon class="region" :points="region" />
              </svg>

              <div class="tools">
                <div class="tool-group">
                  <button type="button" aria-label="Zoom in"><svg viewBox="0 0 36 36"><path class="thick" d="M19 9 V35 M6 22 H32" /></svg></button>
                  <button type="button" aria-label="Zoom out"><svg viewBox="0 0 36 36"><path class="thick" d="M6 22 H32" /></svg></button>
                </div>
                <div class="tool-group">
                  <button type="button" aria-label="Full screen"><svg viewBox="0 0 36 36"><path class="frame" d="M4 14 V4 H14 M22 4 H32 V14 M32 22 V32 H22 M14 32 H4 V22" /></svg></button>
                </div>
                <div class="tool-group">
                  <button type="button" aria-label="Draw a line"><svg viewBox="0 0 36 36"><path class="mid" d="M10 26 L26 11 " /><path class="knob" d="M7 25 H11 V29 H7 Z M25 7 H29 V11 H25 Z" /></svg></button>
                  <button type="button" aria-label="Draw a polygon"><svg viewBox="0 0 36 36"><path class="solid" d="M6 17 L16 6 L30 12 L28 27 L13 30 Z" /></svg></button>
                  <button type="button" aria-label="Draw a marker"><svg viewBox="0 0 36 36"><path class="solid" fill-rule="evenodd" d="M18 6 C24 6 27 10 27 14.500 C27 20 22 25 18 29 C14 25 9 20 9 14.500 C9 10 12 6 18 6 Z M18 9.500 A4.500 4.500 0 1 0 18 18.500 A4.500 4.500 0 1 0 18 9.500 Z" /></svg></button>
                </div>
                <div class="tool-group last">
                  <button type="button" aria-label="Edit layers"><svg viewBox="0 0 36 36"><path class="mid" d="M20 8.500 H13 Q7.500 8.500 7.500 14 V22 Q7.500 27.500 13 27.500 H21 Q26.500 27.500 26.500 22 V17" /><path class="pen" d="M15.500 19.500 L25 11" /><path class="solid" d="M29 5 L32 8 L29 11 L26 8 Z" /></svg></button>
                  <button type="button" aria-label="Delete layers"><svg viewBox="0 0 36 36"><path class="thin" d="M7 9 H29 M14 9 V5 H22 V9 M10 13 H26 V29 H10 Z M14 13 V29 M18 13 V29 M22 13 V29" /></svg></button>
                </div>
              </div>

              <div class="bottom">
                <p class="credit"><a href="#leaflet">Leaflet</a> | © <a href="#osm">OpenStreetMap</a> © <a href="#mapbox">Mapbox</a></p>
                <div class="bar">
                  <div class="bar-group views">
                    <button type="button" aria-label="Set view"><svg viewBox="0 0 40 40"><path d="M2 13 V7 H9 M31 7 H38 V13 M38 29 V35 H31 M9 35 H2 V29 M20 16 V26 M15 21 H25" /></svg></button>
                    <button type="button" aria-label="Save view"><svg viewBox="0 0 40 40"><path d="M1 1 H33 L39 7 V39 H1 Z M11 1 V15 H31 V1 M23 5 H27 V11 H23 Z M7 39 V21 H33 V39" /></svg></button>
                  </div>
                  <div class="bar-group">
                    <button type="button" aria-label="Upload"><svg viewBox="0 0 40 40"><path d="M20 32 V7 M9 18 L20 7 L31 18 M2 30 V35 Q2 37 4 37 H36 Q38 37 38 35 V30" /></svg></button>
                    <button type="button" aria-label="Layers"><svg viewBox="0 0 40 40"><path d="M1 15 L20 6 L39 15 L20 23 Z M1 20 L20 29 L39 20 M1 26 L20 35 L39 26" /></svg></button>
                  </div>
                </div>
              </div>
            </div>
          </div>
        </section>
      </div>
    </main>
  </div>
</template>

<style>
body {
  margin: 0;
  background: #f4f4f4;
}
</style>

<style scoped>
.page {
  min-height: 100vh;
  box-sizing: border-box;
  padding-bottom: 56px;
  font-family: 'Noto Sans', sans-serif;
  color: #3d4043;
}
.page *,
.page *::before {
  box-sizing: border-box;
}
button,
input {
  font: inherit;
  color: inherit;
}
button {
  margin: 0;
  cursor: pointer;
}
svg {
  display: block;
  flex: none;
  fill: none;
  stroke: currentColor;
}
.topbar {
  position: relative;
  display: flex;
  align-items: center;
  justify-content: space-between;
  height: 102px;
  padding: 2px 40px 0 48px;
  background: #5e7f41;
  border-top: 2px solid #4d444f;
  border-bottom: 2px solid #55733b;
  box-shadow: 0 2px 4px rgba(0, 0, 0, 0.1);
}
h1 {
  margin: 0;
  font-size: 46px;
  line-height: 60px;
  font-weight: 400;
  color: #d3dcca;
}
.actions {
  display: flex;
  gap: 32px;
}
.split {
  display: flex;
}
.action {
  display: flex;
  align-items: center;
  height: 68px;
  padding: 0 20px 0 26px;
  font-size: 32px;
  line-height: 40px;
  color: #5e7f41;
  background: #eff1ec;
  border: 2px solid #fff;
  border-radius: 8px;
}
.action svg {
  stroke-width: 2;
}
.ico-back {
  width: 16px;
  height: 32px;
  margin-right: 17px;
}
.save {
  padding: 0 19px 0 18px;
  border-right-width: 0;
  border-radius: 8px 0 0 8px;
}
.ico-check {
  width: 34px;
  height: 32px;
  margin-right: 8px;
}
.more {
  width: 60px;
  padding: 4px 0 0;
  justify-content: center;
  border-radius: 0 8px 8px 0;
}
.ico-caret,
.ico-drop {
  width: 18px;
  height: 9px;
  fill: currentColor;
  stroke: none;
}
.content {
  display: grid;
  grid-template-columns: minmax(0, 1332fr) 986fr;
  padding: 0 48px;
}
.related {
  padding: 6px 0 80px 80px;
}
.limit {
  margin: 0;
  font-size: 29px;
  line-height: 40px;
  font-style: italic;
  color: #9a9a9a;
}
.adders {
  display: flex;
  gap: 9px;
  margin-top: 33px;
}
.outline {
  display: flex;
  align-items: center;
  gap: 10px;
  height: 76px;
  padding: 0 32px;
  font-size: 32px;
  line-height: 40px;
  background: #fff;
  border: 2px solid #ccc;
  border-radius: 8px;
}
.ico-plus {
  width: 30px;
  height: 30px;
  stroke-width: 2;
}
hr {
  height: 2px;
  margin: 0;
  background: #ddd;
  border: 0;
}
.field {
  display: flex;
  padding-top: 79px;
}
.globe {
  width: 38px;
  height: 38px;
  margin: 5px 42px 0 0;
  stroke-width: 2;
}
.field-body {
  flex: 1;
  min-width: 0;
}
.field-head {
  display: flex;
  align-items: center;
  gap: 40px;
  height: 50px;
  margin-bottom: 15px;
}
h2 {
  margin: 0;
  font-size: 32px;
  line-height: 48px;
  font-weight: 500;
}
.help {
  height: 50px;
  padding: 0 33px;
  font-size: 30px;
  line-height: 40px;
  color: #8a8a8a;
  background: #fff;
  border: 2px solid #ccc;
  border-radius: 8px;
}
.search-panel {
  padding: 20px;
  border: 2px solid #ccc;
  border-radius: 8px 8px 0 0;
}
.search {
  display: flex;
  align-items: center;
  gap: 31px;
  height: 80px;
  padding: 0 30px 0 26px;
  background: #fff;
  border: 2px solid #ccc;
  border-radius: 8px;
}
.search input {
  flex: 1;
  min-width: 0;
  height: 60px;
  padding: 0 0 2px;
  font-size: 32px;
  background: none;
  border: 0;
}
.search input::placeholder {
  color: #aaa;
  opacity: 1;
}
.bare {
  padding: 0;
  background: none;
  border: 0;
}
.ico-locate {
  width: 38px;
  height: 38px;
  color: #ccc;
  stroke-width: 2;
}
.ico-drop {
  width: 20px;
  height: 10px;
  color: #858585;
}
.coords {
  display: flex;
  gap: 20px;
  margin: 18px 0 2px;
}
.coords input {
  flex: 1;
  min-width: 0;
  height: 76px;
  padding: 0 16px 2px;
  font-size: 32px;
  background: #fff;
  border: 2px solid #ccc;
  border-radius: 8px;
}
.coords input::placeholder {
  color: #999;
  opacity: 1;
}
.go {
  display: flex;
  align-items: center;
  justify-content: center;
  width: 80px;
  height: 76px;
  margin-left: 20px;
  padding: 0 0 0 6px;
  background: #fff;
  border: 2px solid #ccc;
  border-radius: 8px;
}
.ico-go {
  width: 16px;
  height: 32px;
  stroke-width: 2;
}

.map {
  position: relative;
  aspect-ratio: 1252 / 1000;
  overflow: hidden;
}
.canvas {
  width: 100%;
  height: 100%;
  stroke: none;
}
.canvas pattern path {
  stroke: #fff;
  stroke-width: 2;
  opacity: 0.8;
}
.land {
  fill: #efece5;
}
.water {
  fill: #aed5e3;
}
.street,
.road,
.road-case,
.arterial,
.arterial-case,
.ramp,
.coast,
.freeway,
.freeway-case {
  fill: none;
  stroke: #fff;
  stroke-linejoin: round;
}
.street {
  stroke-width: 2;
  opacity: 0.8;
}
.road-case {
  stroke: #dadcea;
  stroke-width: 9;
}
.road {
  stroke-width: 6;
}
.arterial-case {
  stroke: #dadcea;
  stroke-width: 12;
}
.arterial {
  stroke-width: 8;
}
.ramp {
  stroke: #f4cb84;
  stroke-width: 2;
}
.freeway-case {
  stroke-width: 14;
}
.freeway {
  stroke: #f4cb84;
  stroke-width: 10;
}
.coast {
  stroke: #f2ee8c;
  stroke-width: 8;
}
.ring {
  fill: #fff;
  stroke: #16181c;
  stroke-width: 2;
}
.ring-text,
.shield-text {
  font-size: 19px;
  text-anchor: middle;
  fill: #333;
}
.shield-text {
  fill: #fff;
}
.label {
  font-size: 24px;
  fill: #000;
  stroke: rgba(255, 255, 255, 0.75);
  stroke-width: 3;
  stroke-linejoin: round;
  paint-order: stroke;
}
.area text,
.city text,
.town text {
  text-anchor: middle;
}
.area {
  font-size: 22px;
  font-style: italic;
  letter-spacing: 2px;
  fill: #4e5b8c;
}
.city {
  font-size: 34px;
  font-weight: 500;
}
.town {
  font-size: 27px;
}
.small {
  font-size: 22px;
}
.lake {
  font-size: 26px;
  fill: #7b9aac;
  stroke: none;
}
.headland {
  font-size: 23px;
  font-style: italic;
  fill: #47703f;
  text-anchor: end;
}
.tree {
  fill: #47703f;
  stroke: #fff;
  stroke-width: 2;
  paint-order: stroke;
}
.region {
  fill: rgba(94, 131, 62, 0.2);
  stroke: #618d3b;
  stroke-opacity: 0.88;
  stroke-width: 8;
}

.tools {
  position: absolute;
  top: 0;
  left: 0;
  display: flex;
  flex-direction: column;
  gap: 28px;
  padding: 24px;
  background: rgba(16, 16, 16, 0.75);
  border-radius: 0 0 8px 0;
}
.tool-group {
  width: 60px;
  overflow: hidden;
  background: #fff;
  border-radius: 4px;
  box-shadow: 0 0 0 4px rgba(0, 0, 0, 0.2);
}
.tool-group.last {
  margin-top: 4px;
}
.tool-group button {
  display: flex;
  align-items: center;
  justify-content: center;
  width: 60px;
  height: 60px;
  padding: 0;
  color: #464646;
  background: #fff;
  border: 0;
}
.tool-group button:not(:last-child) {
  border-bottom: 2px solid #ccc;
}
.tool-group svg {
  width: 36px;
  height: 36px;
}
.thick {
  stroke: #000;
  stroke-width: 5;
}
.frame {
  stroke-width: 4;
}
.mid {
  stroke-width: 3;
}
.pen {
  stroke-width: 4;
}
.knob {
  fill: #fff;
  stroke-width: 2;
}
.thin {
  stroke-width: 2;
}
.solid {
  fill: currentColor;
  stroke: none;
}
.bottom {
  position: absolute;
  right: 0;
  bottom: 0;
  left: 0;
  display: flex;
  flex-direction: column;
  align-items: flex-start;
}
.credit {
  margin: 0;
  padding: 0 16px 0 10px;
  font-family: 'Liberation Sans', sans-serif;
  font-size: 22px;
  line-height: 33px;
  color: #bbb;
  background: rgba(0, 0, 0, 0.5);
  border-radius: 0 8px 0 0;
}
.credit a {
  color: #ddd;
  text-decoration: none;
}
.bar {
  display: flex;
  align-items: center;
  align-self: stretch;
  justify-content: space-between;
  height: 90px;
  padding: 0 20px 0 25px;
  background: rgba(16, 16, 16, 0.75);
  border-radius: 0 0 8px 8px;
}
.bar-group {
  display: flex;
  gap: 35px;
}
.bar-group.views {
  gap: 41px;
}
.bar button {
  padding: 0;
  color: #fff;
  background: none;
  border: 0;
}
.bar svg {
  width: 40px;
  height: 40px;
  stroke-width: 2;
}
</style>
